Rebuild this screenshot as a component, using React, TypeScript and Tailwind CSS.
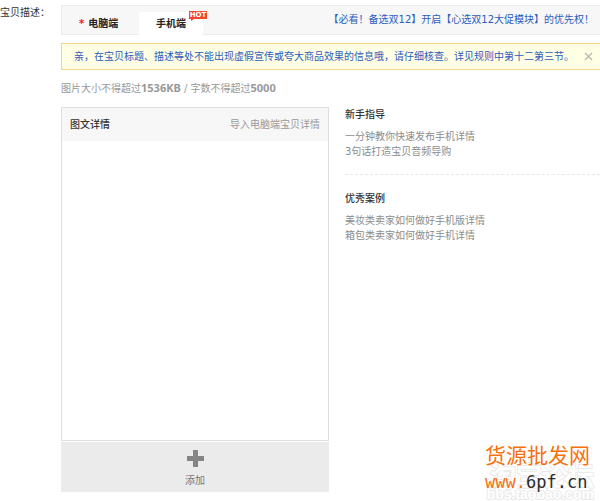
import { useState } from 'react';
import { clsx } from 'clsx';

type TabKey = 'pc' | 'mobile';

interface LinkGroupProps {
  title: string;
  links: string[];
  className?: string;
}

const guideLinks = ['一分钟教你快速发布手机详情', '3句话打造宝贝音频导购'];
const caseLinks = ['美妆类卖家如何做好手机版详情', '箱包类卖家如何做好手机详情'];

function HotBadge() {
  return (
    <span className="absolute -top-px -right-1 h-2 w-[18px] bg-[#f5452c] text-center font-['DejaVu_Sans',sans-serif] text-[7px] leading-2 font-bold text-white">
      HOT
      <svg className="absolute top-2 left-0.5" width="3" height="2" viewBox="0 0 3 2">
        <path d="M0 0h3L0 2z" fill="#f5452c" />
      </svg>
    </span>
  );
}

function LinkGroup({ title, links, className }: LinkGroupProps) {
  return (
    <section className={className}>
      <h2 className="mb-[7px] leading-[15px] font-medium text-[#333]">{title}</h2>
      <ul>
        {links.map((link) => (
          <li key={link} className="leading-[15px]">
            <a href="#" className="text-[#8c8c8c]">{link}</a>
          </li>
        ))}
      </ul>
    </section>
  );
}

function Tabs({ value, onChange }: { value: TabKey; onChange: (key: TabKey) => void }) {
  return (
    <div className="flex h-[30px] items-end border border-r-0 border-[#ececec] bg-[#f7f7f7]">
      <button
        type="button"
        onClick={() => onChange('pc')}
        className={clsx('h-[22px] w-[77px] pl-[17px] text-left font-bold text-[#222]', value === 'pc' && 'bg-white')}
      >
        <span className="mr-1 text-[#f02020]">*</span>
        电脑端
      </button>
      <button
        type="button"
        onClick={() => onChange('mobile')}
        className={clsx('relative -mb-px h-[23px] w-16 font-bold text-[#222]', value === 'mobile' && 'bg-white')}
      >
        手机端
        <HotBadge />
      </button>
      <a href="#" className="ml-auto self-center pr-1.5 pb-0.5 whitespace-nowrap text-[#2a5cc0]">
        【必看！备选双12】开启【心选双12大促模块】的优先权！
      </a>
    </div>
  );
}

function SiteMark() {
  return (
    <div className="absolute right-0 bottom-0 h-[57px] w-[115px]">
      <div className="absolute right-0 bottom-0 text-right font-bold whitespace-nowrap text-white [-webkit-text-stroke:2px_#ebebeb] [paint-order:stroke]">
        <p className="pr-1.5 text-[26px] leading-5">淘宝论坛</p>
        <p className="pr-1.5 font-['Liberation_Sans',sans-serif] text-[14px] leading-[14px]">bbs.taobao.com</p>
      </div>
      <div className="relative font-['DejaVu_Sans_Mono','Noto_Sans_CJK_SC',monospace]">
        <p className="text-[21px] leading-6 text-[#f5720c]">货源批发网</p>
        <p className="pt-1 text-[17px] leading-5 text-[#2c2c2c]">
          <span className="text-[#f5720c]">www.</span>6pf.cn
        </p>
      </div>
    </div>
  );
}

export default function App() {
  const [tab, setTab] = useState<TabKey>('mobile');
  const [noticeOpen, setNoticeOpen] = useState(true);

  return (
    <main className="relative flex min-h-screen bg-white pt-[5px] font-['DejaVu_Sans','Noto_Sans_CJK_SC',sans-serif] text-[10px] leading-[15px] text-[#333]">
      <div className="w-[61px] shrink-0 whitespace-nowrap">宝贝描述：</div>
      <div className="min-w-0 flex-1">
        <Tabs value={tab} onChange={setTab} />

        {noticeOpen && (
          <div className="mt-2 flex h-[27px] items-center justify-between border border-r-0 border-[#f2d585] bg-[#ffffe3] pr-[7px] pl-3">
            <p className="whitespace-nowrap text-[#2a5cc0]">
              亲，在宝贝标题、描述等处不能出现虚假宣传或夸大商品效果的信息哦，请仔细核查。详见规则中第十二第三节。
            </p>
            <button type="button" aria-label="关闭" onClick={() => setNoticeOpen(false)}>
              <svg width="9" height="9" viewBox="0 0 9 9" stroke="#bdbdb3" strokeWidth="1.5">
                <path d="M1 1l7 7M8 1L1 8" />
              </svg>
            </button>
          </div>
        )}

        <p className="mt-2.5 text-[#999]">
          图片大小不得超过<b className="font-['Noto_Sans',sans-serif] text-[11px]">1536KB</b> / 字数不得超过
          <b className="font-['Noto_Sans',sans-serif] text-[11px]">5000</b>
        </p>

        <div className="mt-[11px] flex gap-4">
          <div className="w-[268px] shrink-0">
            <div className="h-[334px] border border-[#dedede]">
              <div className="flex h-[33px] items-center justify-between bg-[#f7f7f7] px-2">
                <h2 className="font-medium">图文详情</h2>
                <a href="#" className="text-[#999]">导入电脑端宝贝详情</a>
              </div>
            </div>
            <button type="button" className="mt-px flex h-[50px] w-full flex-col items-center bg-[#ebebeb] pt-2 text-[#777]">
              <svg width="17" height="17" viewBox="0 0 17 17" fill="#858585">
                <path d="M6 0h5v6h6v5h-6v6H6v-6H0V6h6z" />
              </svg>
              <span className="mt-1.5">添加</span>
            </button>
          </div>

          <aside className="flex-1">
            <LinkGroup title="新手指导" links={guideLinks} className="pb-[15px]" />
            <LinkGroup title="优秀案例" links={caseLinks} className="border-t border-dashed border-[#e6e6e6] pt-4" />
          </aside>
        </div>
      </div>
      <SiteMark />
    </main>
  );
}
